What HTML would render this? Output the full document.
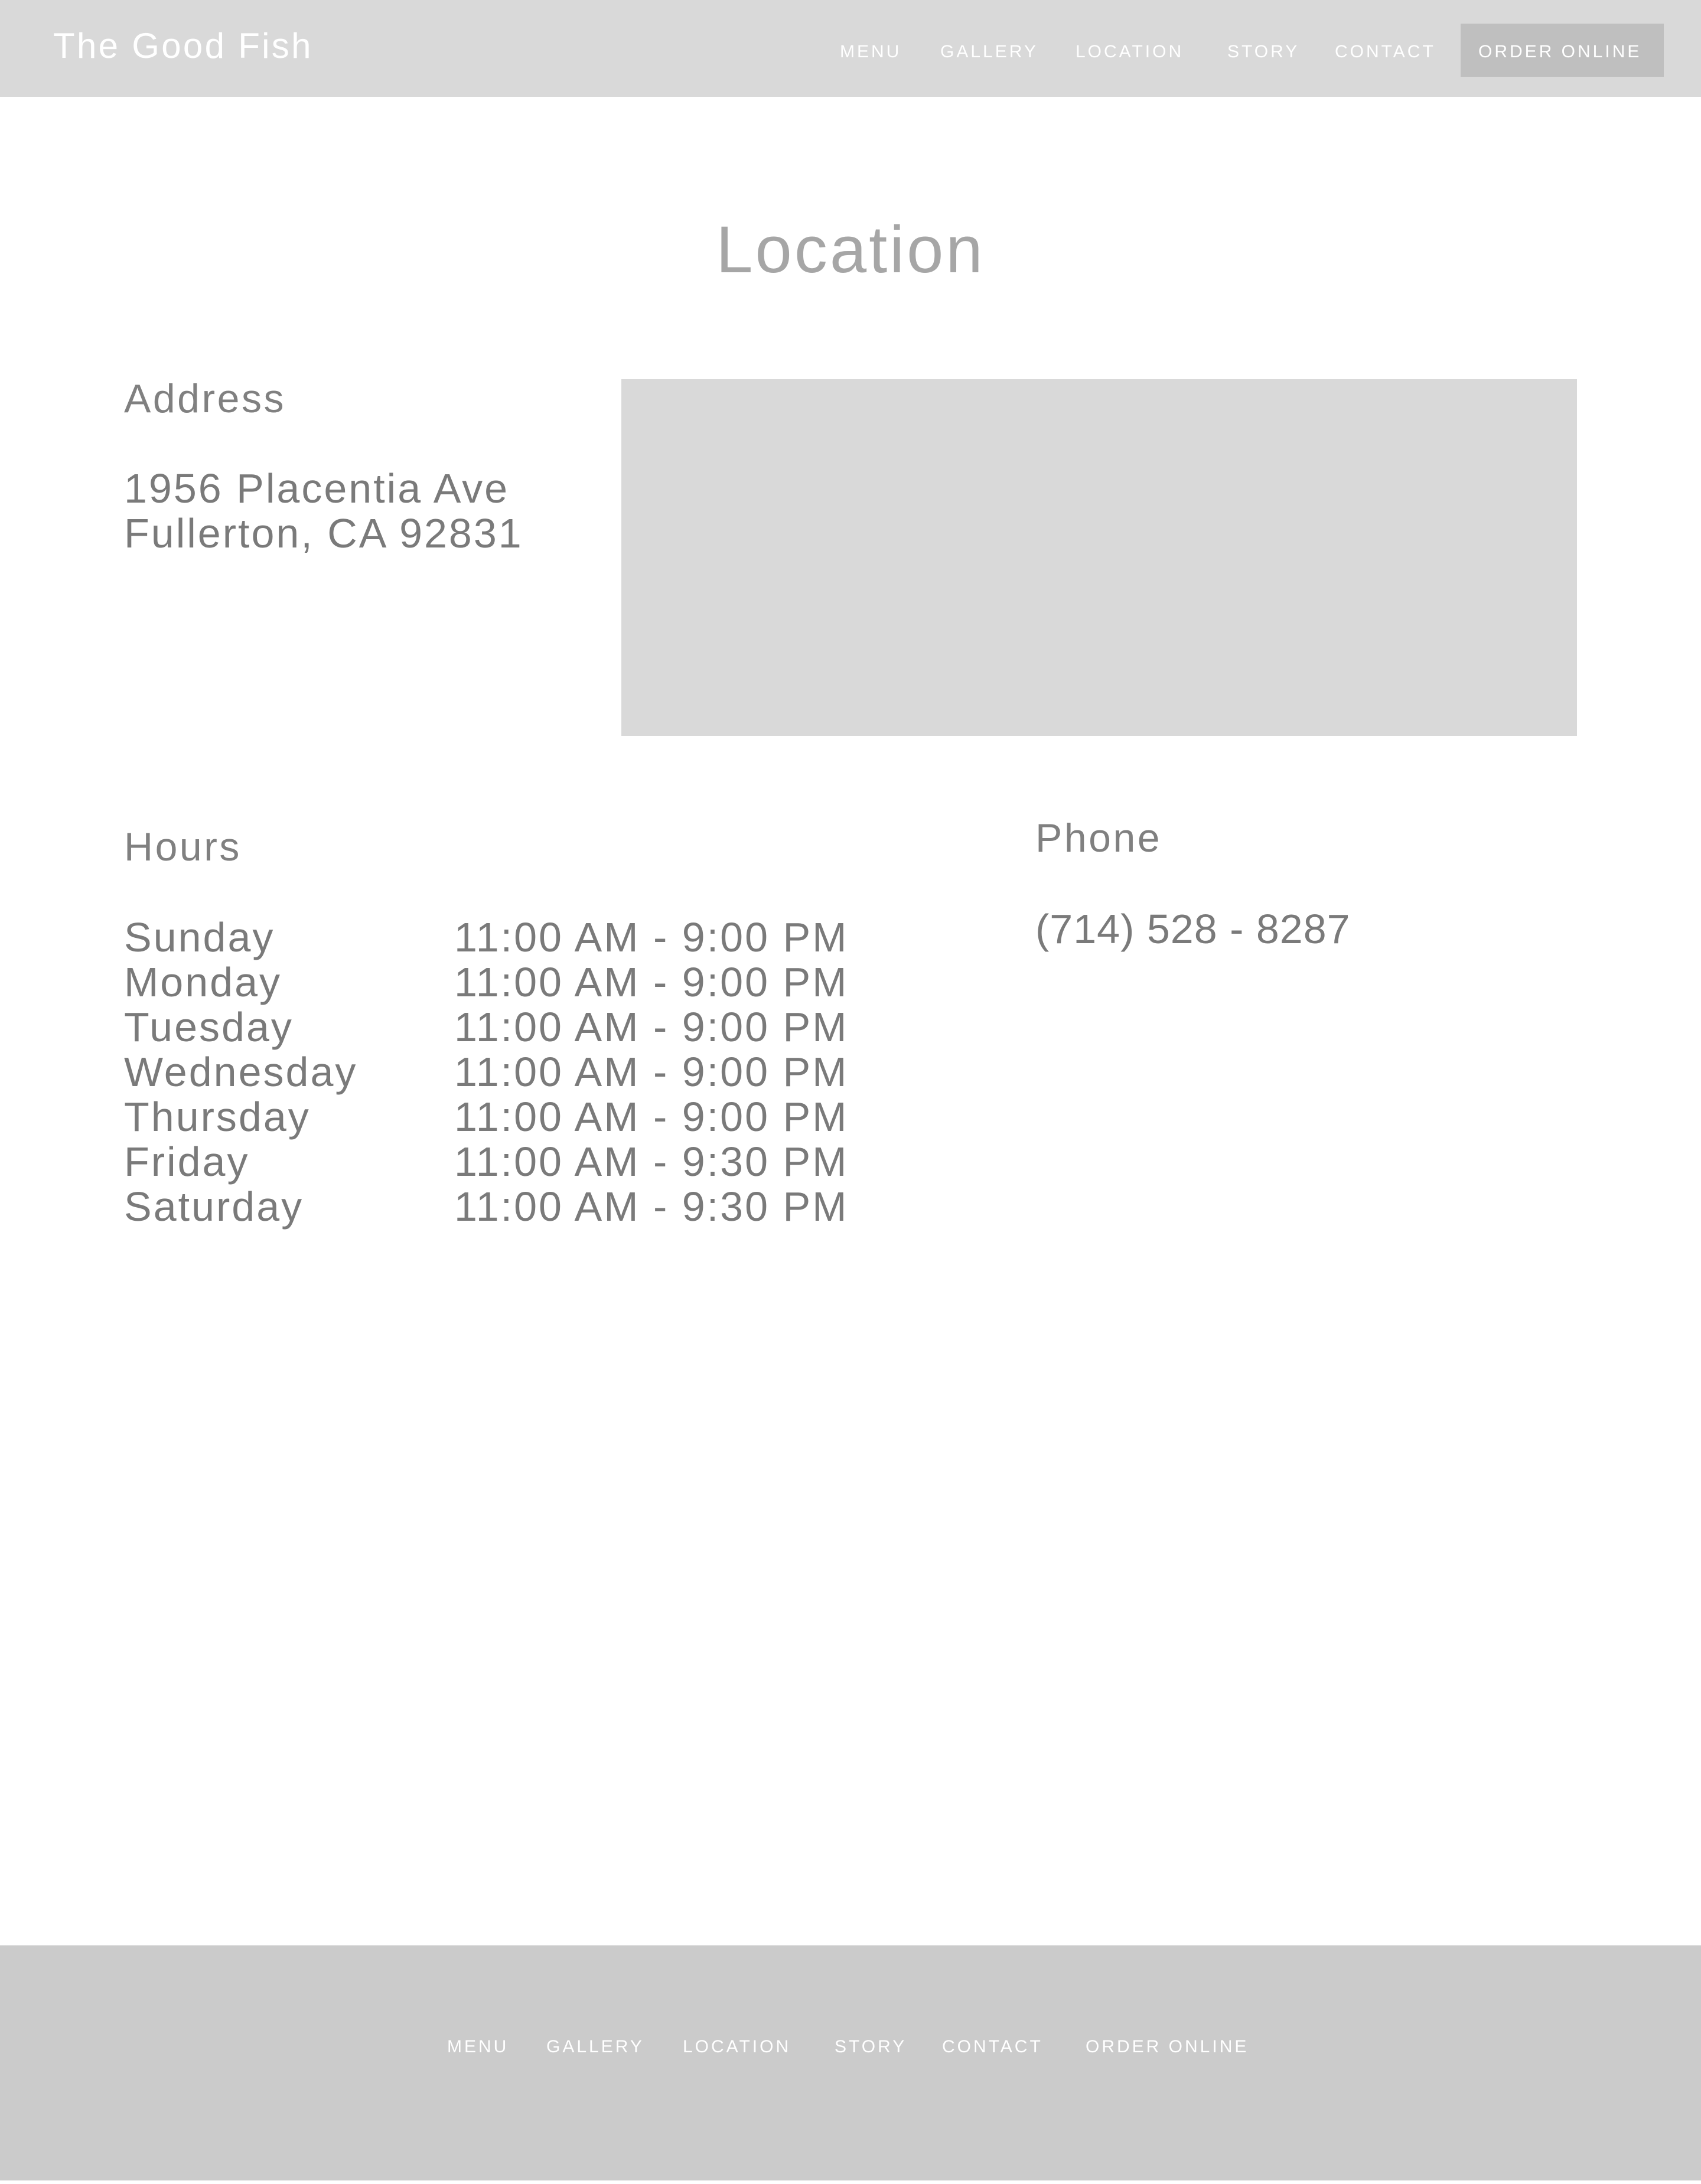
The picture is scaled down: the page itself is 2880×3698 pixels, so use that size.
<!DOCTYPE html>
<html><head><meta charset="utf-8"><style>
*{margin:0;padding:0;box-sizing:border-box}
html,body{width:2880px;height:3698px;background:#fff;font-family:"Liberation Sans",sans-serif;position:relative;overflow:hidden}
.a{position:absolute;white-space:nowrap;line-height:1}
header{position:absolute;left:0;top:0;width:2880px;height:164px;background:#d9d9d9}
.nav{font-size:30px;letter-spacing:4px;color:#fff}
.btn{position:absolute;left:2473px;top:40px;width:344px;height:90px;background:#bfbfbf}
.h{font-size:68px;color:#808080;letter-spacing:3.5px}
.t{font-size:70px;color:#7a7a7a;letter-spacing:3px}
footer{position:absolute;left:0;top:3294px;width:2880px;height:398px;background:#cbcbcb}
</style></head><body>
<header></header>
<div class="btn"></div>
<div class="a" style="left:90px;top:48px;font-size:60px;color:#fff;letter-spacing:3.3px">The Good Fish</div>
<div class="a nav" style="left:1422px;top:73px">MENU</div>
<div class="a nav" style="left:1592px;top:73px">GALLERY</div>
<div class="a nav" style="left:1821px;top:73px">LOCATION</div>
<div class="a nav" style="left:2078px;top:73px">STORY</div>
<div class="a nav" style="left:2260px;top:73px">CONTACT</div>
<div class="a nav" style="left:2503px;top:73px">ORDER ONLINE</div>

<div class="a" style="left:0;width:2880px;text-align:center;top:367px;font-size:112px;color:#a6a6a6;letter-spacing:4px">Location</div>

<div class="a h" style="left:210px;top:641px">Address</div>
<div class="a t" style="left:210px;top:792px">1956 Placentia Ave</div>
<div class="a t" style="left:210px;top:868px">Fullerton, CA 92831</div>
<div style="position:absolute;left:1052px;top:642px;width:1618px;height:604px;background:#d9d9d9"></div>

<div class="a h" style="left:210px;top:1400px">Hours</div>
<div class="a t" style="left:210px;top:1552px">Sunday</div><div class="a t" style="left:769px;top:1552px">11:00 AM - 9:00 PM</div>
<div class="a t" style="left:210px;top:1628px">Monday</div><div class="a t" style="left:769px;top:1628px">11:00 AM - 9:00 PM</div>
<div class="a t" style="left:210px;top:1704px">Tuesday</div><div class="a t" style="left:769px;top:1704px">11:00 AM - 9:00 PM</div>
<div class="a t" style="left:210px;top:1780px">Wednesday</div><div class="a t" style="left:769px;top:1780px">11:00 AM - 9:00 PM</div>
<div class="a t" style="left:210px;top:1856px">Thursday</div><div class="a t" style="left:769px;top:1856px">11:00 AM - 9:00 PM</div>
<div class="a t" style="left:210px;top:1932px">Friday</div><div class="a t" style="left:769px;top:1932px">11:00 AM - 9:30 PM</div>
<div class="a t" style="left:210px;top:2008px">Saturday</div><div class="a t" style="left:769px;top:2008px">11:00 AM - 9:30 PM</div>

<div class="a h" style="left:1753px;top:1385px">Phone</div>
<div class="a t" style="left:1753px;top:1538px;letter-spacing:1px">(714) 528 - 8287</div>

<footer></footer>
<div class="a nav" style="left:757px;top:3451px">MENU</div>
<div class="a nav" style="left:925px;top:3451px">GALLERY</div>
<div class="a nav" style="left:1156px;top:3451px">LOCATION</div>
<div class="a nav" style="left:1413px;top:3451px">STORY</div>
<div class="a nav" style="left:1595px;top:3451px">CONTACT</div>
<div class="a nav" style="left:1838px;top:3451px">ORDER ONLINE</div>
</body></html>
